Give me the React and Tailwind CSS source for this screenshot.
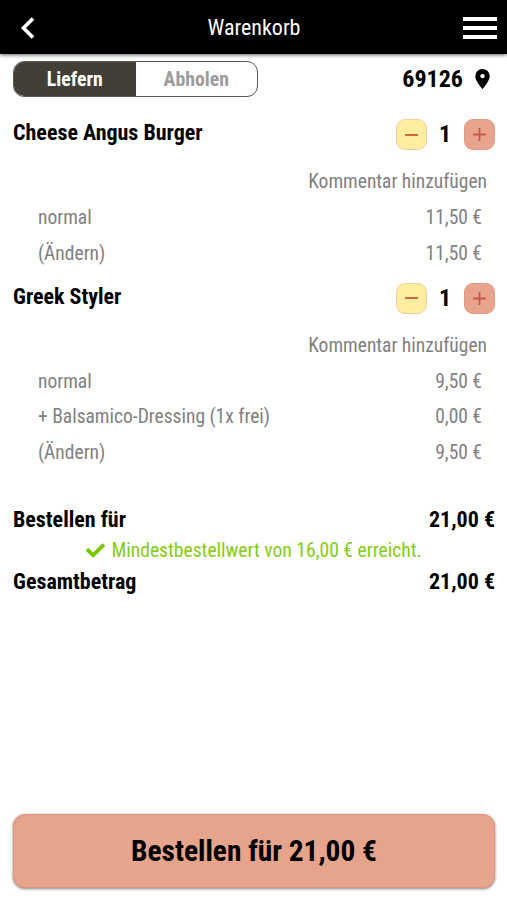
import { useState } from "react";
import { FaCheck } from "react-icons/fa";

const initialItems = [
    {
        name: "Cheese Angus Burger",
        rows: [
            { label: "normal", price: "11,50 €" },
            { label: "(Ändern)", price: "11,50 €" },
        ],
    },
    {
        name: "Greek Styler",
        rows: [
            { label: "normal", price: "9,50 €" },
            { label: "+ Balsamico-Dressing (1x frei)", price: "0,00 €" },
            { label: "(Ändern)", price: "9,50 €" },
        ],
    },
];

function Header() {
    return (
        <header className="flex h-[54px] items-center justify-between bg-black pl-5 pr-[10px] text-white shadow-[0_1px_4px_rgba(0,0,0,0.6)]">
            <button className="w-[25px] pt-[2px]" aria-label="Zurück">
                <svg width="16" height="24" viewBox="0 0 16 24" fill="none" stroke="currentColor" strokeWidth="3.6">
                    <path d="M13 2.5 3.5 12 13 21.5" />
                </svg>
            </button>
            <h1 className="pt-[2px] text-[22px] leading-none">Warenkorb</h1>
            <button className="flex w-[34px] flex-col gap-[5px] pt-[2px]" aria-label="Menü">
                <span className="h-1 bg-white" />
                <span className="h-1 bg-white" />
                <span className="h-1 bg-white" />
            </button>
        </header>
    );
}

function Stepper() {
    const [count, setCount] = useState(1);
    return (
        <div className="flex h-[31px] items-center">
            <button
                onClick={() => setCount((prev) => Math.max(0, prev - 1))}
                className="flex size-[31px] items-center justify-center rounded-[9px] border border-[#f6cda2] bg-[#ffee9f]"
                aria-label="Weniger"
            >
                <span className="h-[2px] w-[13px] bg-[#cf6448]" />
            </button>
            <span className="w-[37px] pr-px pb-px text-center text-2xl font-bold leading-none">{count}</span>
            <button
                onClick={() => setCount((prev) => prev + 1)}
                className="flex size-[31px] items-center justify-center rounded-[9px] border border-[#e79782] bg-[#e8a48d]"
                aria-label="Mehr"
            >
                <svg width="13" height="13" viewBox="0 0 13 13" stroke="#cb5545" strokeWidth="1.8">
                    <path d="M0 6.5h13M6.5 0v13" />
                </svg>
            </button>
        </div>
    );
}

function CartItem({ item }) {
    return (
        <section className="pb-[11.5px]">
            <div className="flex h-[31px] justify-between">
                <h2 className="text-[22px] font-bold leading-[27px]">{item.name}</h2>
                <Stepper />
            </div>
            <div className="pt-[14px] pr-[8px] text-right text-[19.5px] leading-[36px] text-[#808080]">
                Kommentar hinzufügen
            </div>
            <div className="pl-[25px] pr-[13px] text-[19.5px] text-[#808080]">
                {item.rows.map((row, index) => (
                    <div key={index} className="flex h-[35.5px] items-center justify-between">
                        <span>{row.label}</span>
                        <span>{row.price}</span>
                    </div>
                ))}
            </div>
        </section>
    );
}

export default function App() {
    const [mode, setMode] = useState("liefern");

    return (
        <div className="flex h-[900px] w-[507px] flex-col bg-white font-['Roboto_Condensed','Roboto',sans-serif] text-black [font-stretch:75%]">
            <Header />
            <main className="flex flex-1 flex-col pt-[7px] pr-[12px] pb-[12px] pl-[13px]">
                <div className="flex h-[36px] items-center justify-between">
                    <div className="flex h-[36px] w-[245px] overflow-hidden rounded-[11px] border border-[#5b5852] text-[19.8px] font-bold">
                        <button
                            onClick={() => setMode("liefern")}
                            className={`flex-1 pt-[2px] ${mode === "liefern" ? "bg-[#433f37] text-white" : "text-[#9c9c9c]"}`}
                        >
                            Liefern
                        </button>
                        <button
                            onClick={() => setMode("abholen")}
                            className={`flex-1 pt-[2px] ${mode === "abholen" ? "bg-[#433f37] text-white" : "text-[#9c9c9c]"}`}
                        >
                            Abholen
                        </button>
                    </div>
                    <div className="flex items-center pr-[5px] text-2xl font-bold">
                        69126
                        <svg className="ml-[12px]" width="15" height="20" viewBox="0 0 15 20">
                            <path
                                fill="currentColor"
                                fillRule="evenodd"
                                d="M7.5 0A7.2 7.2 0 0 0 .3 7.2C.3 12 7.5 20 7.5 20s7.2-8 7.2-12.8A7.2 7.2 0 0 0 7.5 0Zm0 4.9a2.2 2.2 0 1 1 0 4.4 2.2 2.2 0 0 1 0-4.4Z"
                            />
                        </svg>
                    </div>
                </div>

                <div className="pt-[22px]">
                    {initialItems.map((item) => (
                        <CartItem key={item.name} item={item} />
                    ))}
                </div>

                <div className="mt-auto pb-[217px] text-[22px] font-bold leading-[31px]">
                    <div className="flex justify-between">
                        <span>Bestellen für</span>
                        <span>21,00 €</span>
                    </div>
                    <div className="flex items-center justify-center text-[19.6px] font-normal leading-[31px] text-[#86cc15]">
                        <FaCheck className="mr-[6px] size-[19px] text-[#7bc600]" />
                        Mindestbestellwert von 16,00 € erreicht.
                    </div>
                    <div className="flex justify-between">
                        <span>Gesamtbetrag</span>
                        <span>21,00 €</span>
                    </div>
                </div>

                <button className="h-[74px] shrink-0 rounded-[12px] border border-[#e29680] bg-[#e6a48d] text-[29.4px] font-bold shadow-[0_1px_3px_rgba(0,0,0,0.5)]">
                    Bestellen für 21,00 €
                </button>
            </main>
        </div>
    );
}
